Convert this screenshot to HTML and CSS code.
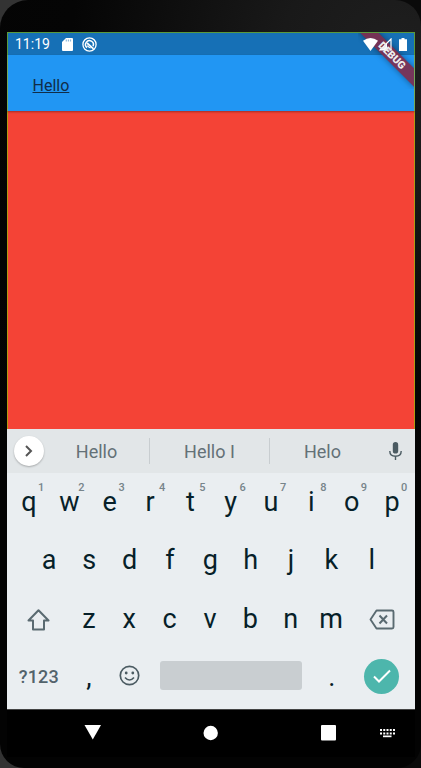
FILE: index.html
```html
<!DOCTYPE html>
<html lang="en">
<head>
<meta charset="utf-8">
<title>Hello</title>
<link rel="stylesheet" href="styles.css">
</head>
<body>
<div class="phone">
  <div class="screen">
    <header class="status">
      <span class="time">11:19</span>
      <svg class="sd" width="11" height="13" viewBox="0 0 11 13"><path d="M4 0h6q1 0 1 1v11q0 1-1 1H1q-1 0-1-1V4z" fill="#fff"/><path d="M4.3 1.5v2M6.4 1.5v2M8.5 1.5v2" stroke="#8fb9da" stroke-width="1.2"/></svg>
      <svg class="sync" width="15" height="15" viewBox="0 0 15 15" fill="none" stroke="#fff"><circle cx="7.5" cy="7.5" r="6.6" stroke-width="1.3"/><path d="M5 10.600A3.900 3.900 0 1 1 11 9.200" stroke-width="1.500"/><path d="M5 6l6.500 5.800" stroke-width="1.700"/><path d="M5.200 8.600q2 2.200 3.500 2.200" stroke-width="1.200"/></svg>
      <span class="space"></span>
      <svg width="15" height="13" viewBox="0 0 15 13"><path d="M0 2.8Q7.5-2.6 15 2.8L7.5 13z" fill="#fff"/></svg>
      <svg class="signal" width="13" height="13" viewBox="0 0 13 13"><path d="M1 12L12 1v11z" fill="none" stroke="#fff" stroke-width="1.2"/><path d="M1 12L8 5v7z" fill="#fff"/></svg>
      <svg class="battery" width="8" height="13" viewBox="0 0 8 13"><path d="M2.5 0h3v1.3H8V13H0V1.3h2.5z" fill="#fff"/></svg>
    </header>
    <div class="appbar"><span>Hello</span></div>
    <main class="content"></main>
    <div class="debug"><span class="ribbon"></span></div>
    <div class="debug label"><span>DEBUG</span></div>
    <div class="suggestions">
      <span class="expand"><svg width="10" height="12" viewBox="0 0 10 12"><path d="M2 1l5 5-5 5" fill="none" stroke="#555" stroke-width="2"/></svg></span>
      <span class="word">Hello</span><span class="word wide">Hello I</span><span class="word last">Helo</span>
      <svg class="mic" width="13" height="19" viewBox="0 0 13 19"><rect x="3.8" y="0" width="5.4" height="11.6" rx="2.7" fill="#4b5b62"/><path d="M.8 9q0 5.2 5.7 5.2T12.200 9M6.500 14v4" fill="none" stroke="#4b5b62" stroke-width="1.4"/></svg>
    </div>
    <div class="keyboard">
      <div class="row"><b>q<i>1</i></b><b>w<i>2</i></b><b>e<i>3</i></b><b>r<i>4</i></b><b>t<i>5</i></b><b>y<i>6</i></b><b>u<i>7</i></b><b>i<i>8</i></b><b>o<i>9</i></b><b>p<i>0</i></b></div>
      <div class="row home"><b>a</b><b>s</b><b>d</b><b>f</b><b>g</b><b>h</b><b>j</b><b>k</b><b>l</b></div>
      <div class="row lower">
        <span class="side"><svg width="23" height="22" viewBox="0 0 23 22"><path d="M11.500 1.200L21.500 11.500H17V20.500H6V11.500H1.500z" fill="none" stroke="#5a6a71" stroke-width="2" stroke-linejoin="round"/></svg></span>
        <b>z</b><b>x</b><b>c</b><b>v</b><b>b</b><b>n</b><b>m</b>
        <span class="side del"><svg width="26" height="21" viewBox="0 0 26 21" fill="none" stroke="#5a6a71" stroke-width="1.900"><path d="M7.500 1.500H23q1.500 0 1.500 1.500V18q0 1.500-1.500 1.500H7.500L1.500 10.500z" stroke-linejoin="round"/><path d="M10.500 6.500l7.500 8M18 6.500l-7.500 8" stroke-width="2"/></svg></span>
      </div>
      <div class="row bottom">
        <span class="sym">?123</span><b>,</b>
        <span class="emoji"><svg width="21" height="21" viewBox="0 0 21 21"><circle cx="10.500" cy="10.500" r="9.200" fill="none" stroke="#4b5b62" stroke-width="1.700"/><circle cx="7.200" cy="8" r="1.400" fill="#4b5b62"/><circle cx="13.800" cy="8" r="1.400" fill="#4b5b62"/><path d="M6 12.500q4.500 5 9 0" fill="none" stroke="#4b5b62" stroke-width="1.700"/></svg></span>
        <span class="spacebar"></span><b class="dot">.</b>
        <span class="done"><svg width="18" height="14" viewBox="0 0 18 14"><path d="M1 7.500l5 5L17 1.500" fill="none" stroke="#fff" stroke-width="2"/></svg></span>
      </div>
    </div>
    <nav class="nav">
      <svg width="408" height="47" viewBox="0 1 408 47" fill="#fff"><path d="M77.500 16h16.500L85.800 30.500z"/><circle cx="203.700" cy="24" r="7.200"/><rect x="314" y="16" width="15" height="15.500" rx="1"/><path d="M373 21h15M373 24.500h15" stroke="#fff" stroke-width="2" stroke-dasharray="2 1.250"/><rect x="376" y="26.500" width="8.500" height="1.700"/></svg>
    </nav>
  </div>
</div>
</body>
</html>
```
FILE: styles.css
```css
* { box-sizing: border-box; }
body { margin: 0; background: linear-gradient(90deg, #333 0 50%, #0a0a0a 50%); font-family: Roboto, sans-serif; }
.phone { height: 768px; width: 421px; padding: 32px 6px 0 7px; overflow: hidden; border-radius: 28px 26px 24px 24px; background: radial-gradient(circle at 400px 60px, #1f1f1f 0, #191919 120px, #050505 330px, #0000 560px) #030303; }
.screen { position: relative; width: 408px; height: 725px; display: flex; flex-direction: column; overflow: hidden; background: #000; }
svg { display: block; flex: none; }
.status { position: relative; z-index: 3; height: 23px; border: solid #5a9a3c; border-width: 1px 1px 0; display: flex; align-items: center; padding: 0 7px; color: #fff; font-size: 14px; }
.screen::before { content: ""; position: absolute; inset: 0 0 auto; height: 23px; background: #1670b6; }
.time { width: 47px; }
.sync { margin-left: 9px; }
.space { flex: 1; }
.signal { margin-left: 1px; }
.battery { margin-left: 7px; }
.appbar { height: 56px; background: #2196f3; padding: 21px 24.500px 0; color: #102d48; font-size: 16px; line-height: 19px; text-decoration: underline; border: solid #74a957; border-width: 0 1px; z-index: 1; box-shadow: 0 1px 2px #0005; }
.content { height: 318px; background: #f44336; border: solid #b29a10; border-width: 0 1px; }
.debug { position: absolute; right: 1px; top: 1px; width: 56px; height: 56px; overflow: hidden; z-index: 2; }
.debug span { position: absolute; left: -7px; top: 15px; width: 80px; height: 13px; transform: rotate(45deg); color: #eee; font-size: 10.500px; font-weight: 900; line-height: 13px; text-align: center; }
.debug .ribbon { background: #802b4ae6; box-shadow: 0 0 6px #0006; }
.label { z-index: 4; }
.debug.label span { left: -6px; top: 16px; }
.suggestions { height: 44px; background: #e2e6e8; display: flex; align-items: center; padding-left: 7px; color: #647177; font-size: 18px; }
.expand { width: 30px; height: 30px; border-radius: 50%; background: #fff; box-shadow: 0 1px 2px #0004; display: grid; place-items: center; }
.word { width: 106px; text-align: center; line-height: 24px; padding-top: 2px; border-right: 1px solid #c8cdd0; }
.wide { width: 120px; }
.last { border: 0; width: 105px; }
.mic { margin-left: 13.500px; }
.keyboard { height: 236px; background: #eaeef1; color: #071f29; padding-left: 1.800px; }
.row { display: flex; height: 58.300px; }
.row b { position: relative; flex: none; width: 40.350px; height: 58px; line-height: 58.500px; text-align: center; font-size: 27px; font-weight: 400; }
.row i { position: absolute; right: 5px; top: 8px; line-height: 13px; font-size: 11px; font-weight: 500; font-style: normal; color: #77848a; }
.home { padding-left: 20px; }
.side { width: 60px; height: 60px; display: grid; place-items: center; }
.del { padding-left: 1px; }
.sym { width: 60px; line-height: 57px; font-size: 18px; font-weight: 500; text-align: center; color: #52636b; letter-spacing: .2px; }
.emoji { width: 40.500px; height: 56px; display: grid; place-items: center; }
.spacebar { width: 142px; height: 29px; margin: 13px 0 0 10px; background: #c9ced1; border-radius: 3px; }
.row .dot { margin-left: 10px; }
.done { width: 35px; height: 35px; margin: 11px 0 0 12.500px; border-radius: 50%; background: #4db6ac; display: grid; place-items: center; }
.nav { height: 48px; background: #000; border-top: 1px solid #444; }
```
